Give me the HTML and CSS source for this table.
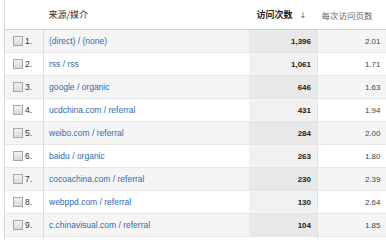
FILE: index.html
```html
<!DOCTYPE html>
<html>
<head>
<meta charset="utf-8">
<link rel="stylesheet" href="styles.css">
</head>
<body>
<table class="report">
  <colgroup>
    <col class="c-idx"><col class="c-src"><col class="c-visits"><col class="c-pages">
  </colgroup>
  <thead>
    <tr>
      <th class="h-idx"></th>
      <th class="h-src">来源/媒介</th>
      <th class="h-visits">访问次数<span class="arrow">↓</span></th>
      <th class="h-pages">每次访问页数</th>
    </tr>
  </thead>
  <tbody>
    <tr class="odd"><td class="idx"><span class="cb"></span>1.</td><td class="src"><a>(direct) / (none)</a></td><td class="visits">1,396</td><td class="pages">2.01</td></tr>
    <tr><td class="idx"><span class="cb"></span>2.</td><td class="src"><a>rss / rss</a></td><td class="visits">1,061</td><td class="pages">1.71</td></tr>
    <tr class="odd"><td class="idx"><span class="cb"></span>3.</td><td class="src"><a>google / organic</a></td><td class="visits">646</td><td class="pages">1.63</td></tr>
    <tr><td class="idx"><span class="cb"></span>4.</td><td class="src"><a>ucdchina.com / referral</a></td><td class="visits">431</td><td class="pages">1.94</td></tr>
    <tr class="odd"><td class="idx"><span class="cb"></span>5.</td><td class="src"><a>weibo.com / referral</a></td><td class="visits">284</td><td class="pages">2.00</td></tr>
    <tr><td class="idx"><span class="cb"></span>6.</td><td class="src"><a>baidu / organic</a></td><td class="visits">263</td><td class="pages">1.80</td></tr>
    <tr class="odd"><td class="idx"><span class="cb"></span>7.</td><td class="src"><a>cocoachina.com / referral</a></td><td class="visits">230</td><td class="pages">2.39</td></tr>
    <tr><td class="idx"><span class="cb"></span>8.</td><td class="src"><a>webppd.com / referral</a></td><td class="visits">130</td><td class="pages">2.64</td></tr>
    <tr class="odd"><td class="idx"><span class="cb"></span>9.</td><td class="src"><a>c.chinavisual.com / referral</a></td><td class="visits">104</td><td class="pages">1.85</td></tr>
    <tr class="tail"><td class="idx"></td><td class="src"></td><td class="visits"></td><td class="pages"></td></tr>
  </tbody>
</table>
</body>
</html>
```
FILE: styles.css
```css
html, body {
  margin: 0;
  padding: 0;
  background: #fff;
  overflow: hidden;
}
body {
  padding-left: 4px;
  font-family: "Liberation Sans", Arial, "Noto Sans CJK SC", sans-serif;
}
.report {
  border-collapse: collapse;
  table-layout: fixed;
  width: 383px;
  border-left: 1px solid #dcdcdc;
}
.c-idx { width: 39px; }
.c-src { width: 205px; }
.c-visits { width: 69px; }
.c-pages { width: 70px; }

thead th {
  height: 29px;
  padding: 0;
  border-bottom: 1px solid #cfcfcf;
  font-weight: normal;
  font-size: 9px;
  text-align: left;
  white-space: nowrap;
  font-family: "Noto Sans CJK SC", sans-serif;
}
.h-src { padding-left: 5px; color: #333; }
.h-visits { padding-left: 8px; font-weight: bold; color: #222; }
.h-visits .arrow {
  margin-left: 7px;
  font-weight: normal;
  color: #555;
  font-family: "DejaVu Sans", sans-serif;
  font-size: 8px;
}
.h-pages { padding-left: 4px; color: #666; font-size: 8.5px; }

tbody td {
  height: 22px;
  padding: 0;
  border-bottom: 1px solid #e6e6e6;
  font-size: 8px;
  white-space: nowrap;
  vertical-align: middle;
}
tbody tr.odd td { background: #f5f5f5; }
tbody tr.odd td.visits { background: #e8e8e8; }
tbody td.visits { background: #f1f1f1; }
tbody tr.tail td { background: #fff; }

.idx {
  border-right: 1px solid #dcdcdc;
  padding-left: 8px !important;
  color: #333;
  font-size: 8.5px !important;
}
.cb {
  display: inline-block;
  width: 8px;
  height: 8px;
  border: 1px solid #a8a8a8;
  background: linear-gradient(#f2f2f2, #d9d9d9);
  vertical-align: -2px;
  margin-right: 2px;
}
.src { padding-left: 5px !important; }
.src a {
  color: #2f6cb3;
  font-size: 8.5px;
  text-decoration: none;
}
.visits {
  text-align: right;
  padding-right: 6px !important;
  font-weight: bold;
  color: #222;
  border-right: 1px solid #e0e0e0;
}
.pages {
  text-align: right;
  padding-right: 7px !important;
  color: #444;
}
```
